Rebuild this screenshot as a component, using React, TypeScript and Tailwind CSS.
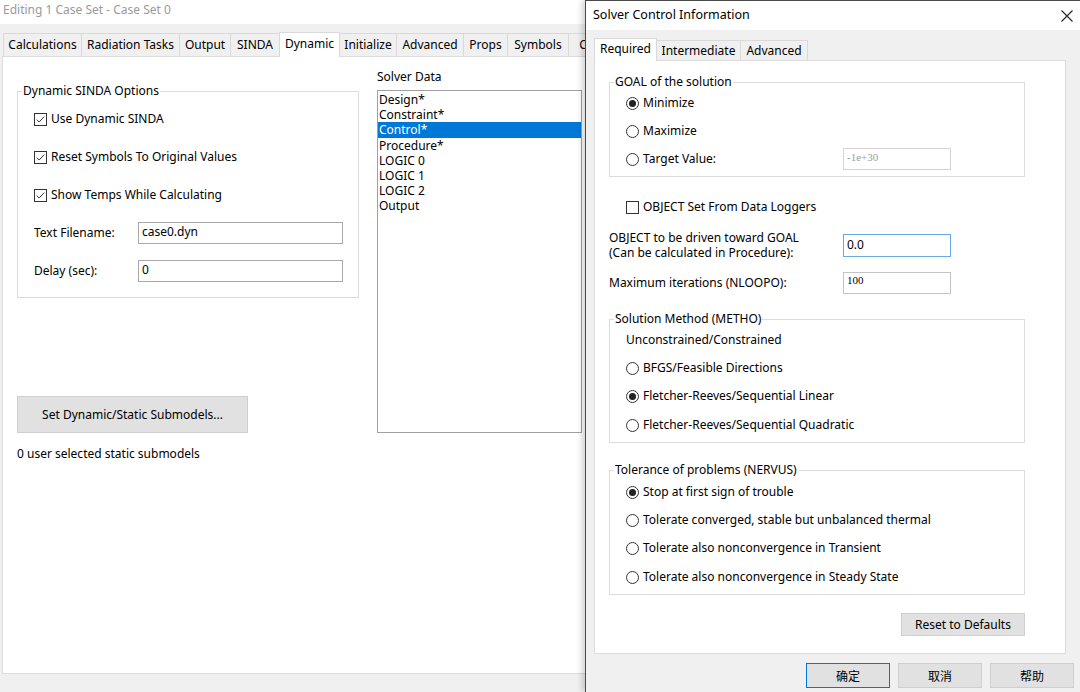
import React from "react";

const mainTabs = [
  { label: "Calculations", w: 79 },
  { label: "Radiation Tasks", w: 99 },
  { label: "Output", w: 52 },
  { label: "SINDA", w: 50 },
  { label: "Dynamic", w: 61, active: true },
  { label: "Initialize", w: 58 },
  { label: "Advanced", w: 68 },
  { label: "Props", w: 45 },
  { label: "Symbols", w: 62 },
  { label: "C", w: 30 },
];

const solverItems = ["Design*", "Constraint*", "Control*", "Procedure*", "LOGIC 0", "LOGIC 1", "LOGIC 2", "Output"];

function CheckBox({ checked }: { checked?: boolean }) {
  return (
    <svg width="13" height="13" viewBox="0 0 13 13" className="shrink-0">
      <rect x="0.5" y="0.5" width="12" height="12" fill="#fff" stroke="#333" />
      {checked && <path d="M2.8 6.6 L5.2 9 L10.2 3.6" fill="none" stroke="#333" strokeWidth="1" />}
    </svg>
  );
}

function Radio({ checked }: { checked?: boolean }) {
  return (
    <svg width="13" height="13" viewBox="0 0 13 13" className="shrink-0">
      <circle cx="6.5" cy="6.5" r="6" fill="#fff" stroke="#333" />
      {checked && <circle cx="6.5" cy="6.5" r="3.5" fill="#222" />}
    </svg>
  );
}

function Group({ title, className, children }: { title: string; className?: string; children: React.ReactNode }) {
  return (
    <fieldset className={`border border-[#dcdcdc] p-0 m-0 min-w-0 ${className || ""}`}>
      <legend className="ml-[4px] px-[1px] leading-[16px]">{title}</legend>
      {children}
    </fieldset>
  );
}

function RadioRow({ label, checked }: { label: string; checked?: boolean }) {
  return (
    <div className="h-[22px] flex items-center gap-[4px]">
      <Radio checked={checked} />
      <span>{label}</span>
    </div>
  );
}

export default function App() {
  return (
    <div className="flex w-[1080px] h-[692px] overflow-hidden bg-[#f0f0f0] text-[12px] text-black font-['Noto_Sans','Liberation_Sans',sans-serif]">
      {/* main case set window */}
      <div className="w-[585px] h-full shrink-0 overflow-hidden flex flex-col">
        <div className="h-[24px] bg-white pl-[3px] leading-[20px] text-[#9a9a9a] whitespace-nowrap">
          Editing 1 Case Set - Case Set 0
        </div>
        <div className="h-[32px] flex items-end pl-[4px] whitespace-nowrap">
          {mainTabs.map((t) => (
            <div
              key={t.label}
              style={{ width: t.w }}
              className={
                t.active
                  ? "shrink-0 h-[25px] -mb-px relative z-10 bg-white border border-b-0 border-[#d9d9d9] -ml-px flex items-center justify-center pb-[3px]"
                  : "shrink-0 h-[23px] bg-[#f0f0f0] border border-b-0 border-[#d9d9d9] -ml-px flex items-center justify-center"
              }
            >
              {t.label}
            </div>
          ))}
        </div>
        <div className="ml-[2px] w-[640px] h-[618px] shrink-0 bg-white border border-[#dcdcdc] flex pl-[14px]">
          {/* left column */}
          <div className="w-[342px] shrink-0 flex flex-col pt-[26px]">
            <Group title="Dynamic SINDA Options">
              <div className="pl-[16px] pt-[9px] pb-[15px] flex flex-col gap-[16px]">
                {["Use Dynamic SINDA", "Reset Symbols To Original Values", "Show Temps While Calculating"].map((l) => (
                  <div key={l} className="h-[22px] flex items-center gap-[4px]">
                    <CheckBox checked />
                    <span>{l}</span>
                  </div>
                ))}
                <div className="h-[22px] flex items-center">
                  <span className="w-[104px] shrink-0">Text Filename:</span>
                  <div className="w-[205px] h-[22px] border border-[#a8a8a8] pl-[3px] leading-[18px]">case0.dyn</div>
                </div>
                <div className="h-[22px] flex items-center">
                  <span className="w-[104px] shrink-0">Delay (sec):</span>
                  <div className="w-[205px] h-[22px] border border-[#a8a8a8] pl-[3px] leading-[18px]">0</div>
                </div>
              </div>
            </Group>
            <button className="mt-[98px] w-[231px] h-[37px] bg-[#e1e1e1] border border-[#cfcfcf] text-[12px]">
              Set Dynamic/Static Submodels...
            </button>
            <div className="mt-[13px] leading-[16px]">0 user selected static submodels</div>
          </div>
          {/* right column */}
          <div className="ml-[18px] w-[205px] shrink-0 flex flex-col pt-[12px]">
            <div className="leading-[16px]">Solver Data</div>
            <div className="mt-[5px] h-[343px] border border-[#a0a0a0] pt-[1px]">
              {solverItems.map((s) => (
                <div
                  key={s}
                  className={`leading-[15.2px] pl-[1px] ${s === "Control*" ? "bg-[#0078d7] text-white" : ""}`}
                >
                  {s}
                </div>
              ))}
            </div>
          </div>
        </div>
      </div>

      {/* Solver Control Information dialog */}
      <div className="w-[495px] h-full shrink-0 border-l border-t border-[#4a4a4a] bg-[#f0f0f0] flex flex-col relative z-10 shadow-[-3px_0_6px_rgba(0,0,0,0.18)]">
        <div className="h-[29px] bg-white flex items-center justify-between pl-[7px] pr-[7px]">
          <span className="text-[12.5px]">Solver Control Information</span>
          <svg width="12" height="12" viewBox="0 0 12 12">
            <path d="M0.5 0.5 L11.5 11.5 M11.5 0.5 L0.5 11.5" stroke="#222" strokeWidth="1.1" />
          </svg>
        </div>
        <div className="pt-[8px] pl-[8px] flex items-end">
          <div className="w-[63px] h-[23px] -mb-px relative z-10 bg-white border border-b-0 border-[#d9d9d9] flex items-center justify-center pb-[3px]">
            Required
          </div>
          <div className="w-[84px] h-[20px] bg-[#f0f0f0] border border-b-0 border-l-0 border-[#d9d9d9] flex items-center justify-center">
            Intermediate
          </div>
          <div className="w-[67px] h-[20px] bg-[#f0f0f0] border border-b-0 border-l-0 border-[#d9d9d9] flex items-center justify-center">
            Advanced
          </div>
        </div>
        <div className="ml-[8px] w-[472px] h-[594px] shrink-0 bg-white border border-[#dcdcdc] flex flex-col pl-[14px] pt-[13px]">
          <Group title="GOAL of the solution" className="w-[416px]">
            <div className="pl-[16px] pt-[2px] pb-[6px] flex flex-col gap-[6px]">
              <RadioRow label="Minimize" checked />
              <RadioRow label="Maximize" />
              <div className="h-[22px] flex items-center">
                <div className="w-[217px] shrink-0 flex items-center gap-[4px]">
                  <Radio />
                  <span>Target Value:</span>
                </div>
                <div className="w-[108px] h-[22px] border border-[#d4d4d4] pl-[3px] text-[11px] leading-[16px] text-[#9c9c9c] font-['Liberation_Serif',serif]">
                  -1e+30
                </div>
              </div>
            </div>
          </Group>

          <div className="mt-[19px] pl-[17px] h-[22px] flex items-center gap-[4px]">
            <CheckBox />
            <span>OBJECT Set From Data Loggers</span>
          </div>

          <div className="mt-[12px] h-[30px] flex items-center">
            <div className="w-[234px] shrink-0 leading-[15px]">
              OBJECT to be driven toward GOAL
              <br />
              (Can be calculated in Procedure):
            </div>
            <div className="w-[108px] h-[23px] border border-[#6aa9e6] pl-[3px] leading-[19px]">0.0</div>
          </div>

          <div className="mt-[12px] h-[22px] flex items-center">
            <div className="w-[234px] shrink-0">Maximum iterations (NLOOPO):</div>
            <div className="w-[108px] h-[22px] border border-[#c4c4c4] pl-[3px] text-[11px] leading-[14px] font-['Liberation_Serif',serif]">
              100
            </div>
          </div>

          <Group title="Solution Method (METHO)" className="w-[416px] mt-[17px]">
            <div className="pl-[16px] pt-[2px] pb-[6px] flex flex-col gap-[6px]">
              <div className="h-[22px] flex items-center">Unconstrained/Constrained</div>
              <RadioRow label="BFGS/Feasible Directions" />
              <RadioRow label="Fletcher-Reeves/Sequential Linear" checked />
              <div className="mt-px">
                <RadioRow label="Fletcher-Reeves/Sequential Quadratic" />
              </div>
            </div>
          </Group>

          <Group title="Tolerance of problems (NERVUS)" className="w-[416px] mt-[19px]">
            <div className="pl-[16px] pt-[3px] pb-[6px] flex flex-col gap-[6px]">
              <RadioRow label="Stop at first sign of trouble" checked />
              <RadioRow label="Tolerate converged, stable but unbalanced thermal" />
              <RadioRow label="Tolerate also nonconvergence in Transient" />
              <div className="mt-px">
                <RadioRow label="Tolerate also nonconvergence in Steady State" />
              </div>
            </div>
          </Group>

          <div className="w-[416px] mt-[18px] flex justify-end">
            <button className="w-[124px] h-[23px] bg-[#e1e1e1] border border-[#cfcfcf] text-[12px]">Reset to Defaults</button>
          </div>
        </div>
        <div className="mt-[9px] pr-[5px] flex justify-end gap-[8px] font-['Noto_Sans_CJK_SC','Noto_Sans',sans-serif]">
          <button className="w-[84px] h-[25px] bg-[#e1e1e1] border border-[#0078d7] text-[12px]">确定</button>
          <button className="w-[84px] h-[25px] bg-[#e1e1e1] border border-[#cfcfcf] text-[12px]">取消</button>
          <button className="w-[84px] h-[25px] bg-[#e1e1e1] border border-[#cfcfcf] text-[12px] mr-px">帮助</button>
        </div>
      </div>
    </div>
  );
}
